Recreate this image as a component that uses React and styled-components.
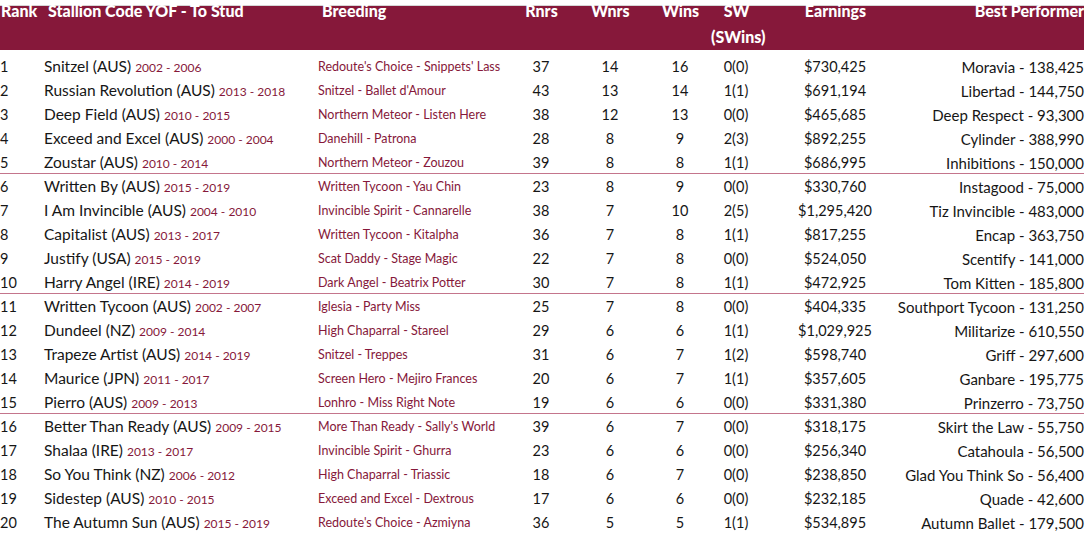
import styled, { createGlobalStyle } from 'styled-components'

const rows = [
  ['1', 'Snitzel (AUS)', '2002 - 2006', "Redoute's Choice - Snippets' Lass", '37', '14', '16', '0(0)', '$730,425', 'Moravia - 138,425'],
  ['2', 'Russian Revolution (AUS)', '2013 - 2018', "Snitzel - Ballet d'Amour", '43', '13', '14', '1(1)', '$691,194', 'Libertad - 144,750'],
  ['3', 'Deep Field (AUS)', '2010 - 2015', 'Northern Meteor - Listen Here', '38', '12', '13', '0(0)', '$465,685', 'Deep Respect - 93,300'],
  ['4', 'Exceed and Excel (AUS)', '2000 - 2004', 'Danehill - Patrona', '28', '8', '9', '2(3)', '$892,255', 'Cylinder - 388,990'],
  ['5', 'Zoustar (AUS)', '2010 - 2014', 'Northern Meteor - Zouzou', '39', '8', '8', '1(1)', '$686,995', 'Inhibitions - 150,000'],
  ['6', 'Written By (AUS)', '2015 - 2019', 'Written Tycoon - Yau Chin', '23', '8', '9', '0(0)', '$330,760', 'Instagood - 75,000'],
  ['7', 'I Am Invincible (AUS)', '2004 - 2010', 'Invincible Spirit - Cannarelle', '38', '7', '10', '2(5)', '$1,295,420', 'Tiz Invincible - 483,000'],
  ['8', 'Capitalist (AUS)', '2013 - 2017', 'Written Tycoon - Kitalpha', '36', '7', '8', '1(1)', '$817,255', 'Encap - 363,750'],
  ['9', 'Justify (USA)', '2015 - 2019', 'Scat Daddy - Stage Magic', '22', '7', '8', '0(0)', '$524,050', 'Scentify - 141,000'],
  ['10', 'Harry Angel (IRE)', '2014 - 2019', 'Dark Angel - Beatrix Potter', '30', '7', '8', '1(1)', '$472,925', 'Tom Kitten - 185,800'],
  ['11', 'Written Tycoon (AUS)', '2002 - 2007', 'Iglesia - Party Miss', '25', '7', '8', '0(0)', '$404,335', 'Southport Tycoon - 131,250'],
  ['12', 'Dundeel (NZ)', '2009 - 2014', 'High Chaparral - Stareel', '29', '6', '6', '1(1)', '$1,029,925', 'Militarize - 610,550'],
  ['13', 'Trapeze Artist (AUS)', '2014 - 2019', 'Snitzel - Treppes', '31', '6', '7', '1(2)', '$598,740', 'Griff - 297,600'],
  ['14', 'Maurice (JPN)', '2011 - 2017', 'Screen Hero - Mejiro Frances', '20', '6', '7', '1(1)', '$357,605', 'Ganbare - 195,775'],
  ['15', 'Pierro (AUS)', '2009 - 2013', 'Lonhro - Miss Right Note', '19', '6', '6', '0(0)', '$331,380', 'Prinzerro - 73,750'],
  ['16', 'Better Than Ready (AUS)', '2009 - 2015', "More Than Ready - Sally's World", '39', '6', '7', '0(0)', '$318,175', 'Skirt the Law - 55,750'],
  ['17', 'Shalaa (IRE)', '2013 - 2017', 'Invincible Spirit - Ghurra', '23', '6', '6', '0(0)', '$256,340', 'Catahoula - 56,500'],
  ['18', 'So You Think (NZ)', '2006 - 2012', 'High Chaparral - Triassic', '18', '6', '7', '0(0)', '$238,850', 'Glad You Think So - 56,400'],
  ['19', 'Sidestep (AUS)', '2010 - 2015', 'Exceed and Excel - Dextrous', '17', '6', '6', '0(0)', '$232,185', 'Quade - 42,600'],
  ['20', 'The Autumn Sun (AUS)', '2015 - 2019', "Redoute's Choice - Azmiyna", '36', '5', '5', '1(1)', '$534,895', 'Autumn Ballet - 179,500'],
]

export default function App() {
  return (
    <>
      <GlobalStyle />
      <Table>
        <HeadRow>
          <HeadCell>Rank</HeadCell>
          <HeadCell inset>Stallion Code YOF - To Stud</HeadCell>
          <HeadCell inset>Breeding</HeadCell>
          <HeadCell center>Rnrs</HeadCell>
          <HeadCell center>Wnrs</HeadCell>
          <HeadCell center>Wins</HeadCell>
          <HeadCell center>
            SW
            <br />
            (SWins)
          </HeadCell>
          <HeadCell center>Earnings</HeadCell>
          <HeadCell right>Best Performer</HeadCell>
        </HeadRow>
        <Body>
          {rows.map((r, i) => (
            <Row key={r[0]} divider={i % 5 === 4 && i < 19}>
              <Cell>{r[0]}</Cell>
              <Name>
                {r[1]} <Years>{r[2]}</Years>
              </Name>
              <Breeding>{r[3]}</Breeding>
              <Cell center>{r[4]}</Cell>
              <Cell center>{r[5]}</Cell>
              <Cell center>{r[6]}</Cell>
              <Cell center>{r[7]}</Cell>
              <Cell center>{r[8]}</Cell>
              <Performer>{r[9]}</Performer>
            </Row>
          ))}
        </Body>
      </Table>
    </>
  )
}

const GlobalStyle = createGlobalStyle`
  body {
    margin: 0;
    background: #ffffff;
    font-family: Lato, 'Open Sans', sans-serif;
    color: #161616;
  }
`

const columns = '44px 274px 194px 58px 80px 60px 52px 146px 176px'

const Table = styled.div`
  width: 1084px;
  padding-top: 5px;
`

const HeadRow = styled.div`
  display: grid;
  grid-template-columns: ${columns};
  height: 44px;
  background: #86183a;
  border-top: 1px solid #d6d6d6;
  color: #ffffff;
  font-weight: 900;
  font-size: 16px;
  line-height: 26px;
`

const HeadCell = styled.div`
  margin-top: -8px;
  white-space: nowrap;
  padding-left: ${({ inset }) => (inset ? '4px' : '1px')};
  text-align: ${({ center, right }) => (center ? 'center' : right ? 'right' : 'left')};
`

const Body = styled.div`
  padding-top: 4px;
`

const Row = styled.div`
  display: grid;
  grid-template-columns: ${columns};
  height: 24px;
  align-items: center;
  box-sizing: border-box;
  border-bottom: 1px solid ${({ divider }) => (divider ? '#c4758c' : 'transparent')};
  font-size: 14.5px;
  line-height: 24px;
`

const Cell = styled.div`
  white-space: nowrap;
  text-align: ${({ center }) => (center ? 'center' : 'left')};
`

const Name = styled.div`
  white-space: nowrap;
  font-size: 15.5px;
`

const Years = styled.span`
  font-size: 12px;
  color: #86183a;
`

const Breeding = styled.div`
  white-space: nowrap;
  font-size: 12.5px;
  color: #86183a;
`

const Performer = styled.div`
  display: flex;
  justify-content: flex-end;
  white-space: nowrap;
  font-size: 15px;
`
